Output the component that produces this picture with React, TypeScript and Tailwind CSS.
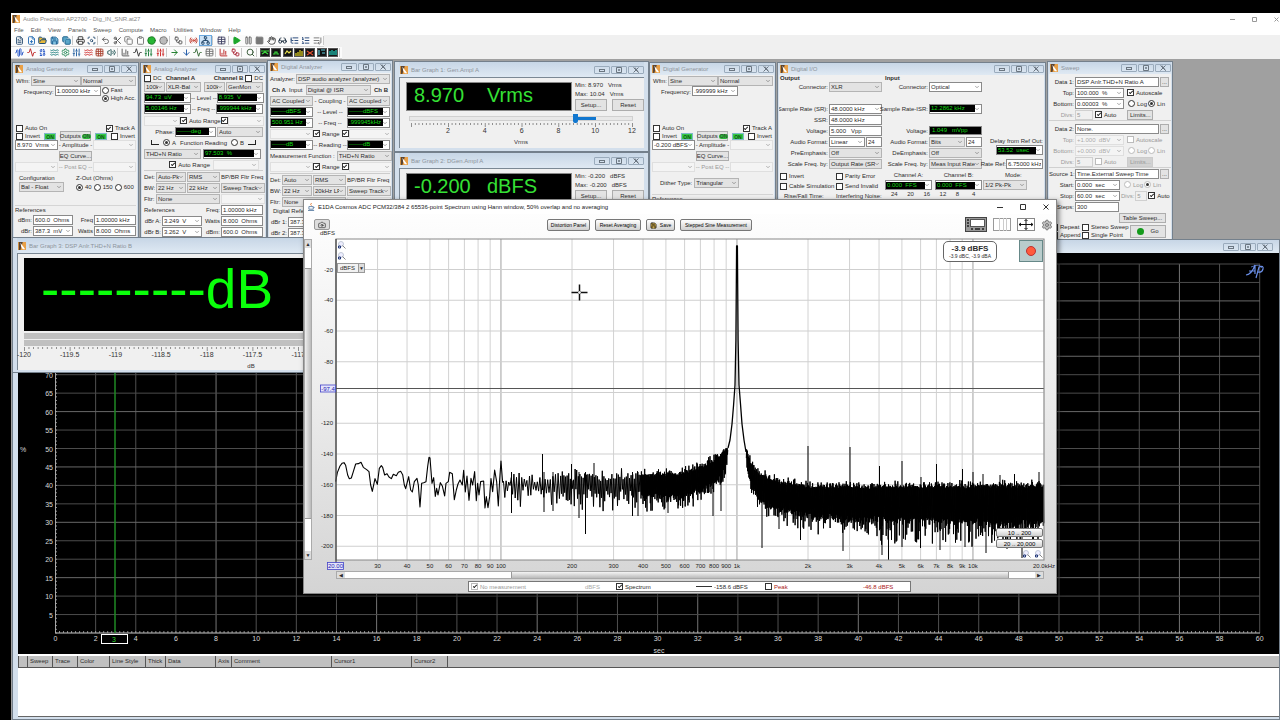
import type { ReactNode } from 'react'
import clsx from 'clsx'
import {
  Activity, ArrowDown, ArrowRight, AudioWaveform, BarChart3, Binary, Camera, ChevronDown, Circle, Clipboard, Copy,
  FilePlus, FileText, FolderOpen, Glasses, Hand, ListEnd, ListOrdered, ListTree, Network, Pause, Play, Printer,
  Radio, Save, ScanSearch, Scissors, Search, Settings, Sliders, Square, Table, Undo2, Volume2, Waves, Workflow, Grid3x3,
} from 'lucide-react'

type Tone = 'grey' | 'white' | 'lcd' | 'off'

const chevron = <ChevronDown size={6} strokeWidth={2} className="-mx-[1px] shrink-0 text-[#555]" />

function Sel({ value = '', label, w = 'w-full', tone = 'grey' }: { value?: string; label: string; w?: string; tone?: Tone }) {
  // options collapse plain spaces, so the gap before a unit is kept with nbsp
  const text = value.replace(/ {2,}/g, '\u00a0\u00a0')
  return (
    <span
      className={clsx(
        'flex h-[10px] shrink-0 items-center border pr-[2px]',
        w,
        tone === 'grey' && 'border-[#b4b4b4] bg-[#e3e3e3]',
        tone === 'white' && 'border-[#8a8a8a] bg-white',
        tone === 'lcd' && 'border-[#8a8a8a] bg-white',
        tone === 'off' && 'border-[#dcdcdc] bg-[#f6f6f6] text-[#999] opacity-80',
      )}
    >
      <select
        aria-label={label}
        defaultValue={text}
        disabled={tone === 'off'}
        className={clsx(
          'min-w-0 flex-1 appearance-none overflow-hidden pl-[1px] outline-none',
          tone === 'lcd' ? 'h-[7px] bg-black leading-[7px] text-[#12d812]' : 'h-[8px] bg-transparent leading-[8px]',
        )}
      >
        <option>{text}</option>
      </select>
      {chevron}
    </span>
  )
}

function Box({ value, label, w = 'w-full', off }: { value: string; label: string; w?: string; off?: boolean }) {
  return (
    <input
      aria-label={label}
      defaultValue={value}
      disabled={off}
      className={clsx('h-[10px] shrink-0 border px-[1px] leading-[8px]', w, off ? 'border-[#d0d0d0] bg-[#f0f0f0] text-[#999]' : 'border-[#8a8a8a] bg-white')}
    />
  )
}

function Tick({ text, on, off, type = 'checkbox', name }: { text: string; on?: boolean; off?: boolean; type?: string; name?: string }) {
  return (
    <label className={clsx('flex items-center gap-[2px] whitespace-nowrap', off && 'text-[#999]')}>
      <input
        type={type}
        name={name}
        defaultChecked={on}
        disabled={off}
        className={clsx(
          'grid size-[7px] shrink-0 appearance-none place-items-center border bg-white',
          off ? 'border-[#bbb]' : 'border-[#333]',
          type === 'radio'
            ? 'rounded-full before:size-[3px] before:rounded-full checked:before:bg-[#333]'
            : 'before:mb-[1px] before:h-[4px] before:w-[2px] before:rotate-45 checked:before:border-r checked:before:border-b checked:before:border-[#222]',
        )}
      />
      {text}
    </label>
  )
}

function Btn({ children, w = '', off }: { children: ReactNode; w?: string; off?: boolean }) {
  return (
    <button disabled={off} className={clsx('flex h-[10px] items-center justify-center border leading-none whitespace-nowrap', w, off ? 'border-[#ccc] bg-[#d2d2d2] text-[#999]' : 'border-[#adadad] bg-[#e3e3e3]')}>
      {children}
    </button>
  )
}

function AppIcon() {
  return (
    <svg viewBox="0 0 10 10" className="size-[8px] shrink-0">
      <rect width="10" height="10" fill="#e9a047" />
      <path d="M1 0h5L3 10H1z" fill="#5b4430" />
      <path d="M3 1l6 8H6L4 6z" fill="#fff" />
    </svg>
  )
}

function Win({ title, className, bar = 'h-[12px]', children }: { title: string; className: string; bar?: string; children: ReactNode }) {
  return (
    <section className={clsx('absolute flex flex-col border border-[#74808c] bg-[#d3dfec] px-[1px]', className)}>
      <header className={clsx('flex shrink-0 items-center gap-[3px] bg-linear-to-b from-[#c7d6e6] to-[#dfe9f3] pl-[1px]', bar)}>
        <AppIcon />
        <h2 className="flex-1 whitespace-nowrap text-[#8d949c]">{title}</h2>
        <span className="flex gap-[1px]">
          {['min', 'max', 'close'].map((k) => (
            <button key={k} aria-label={k} className="grid h-[8px] w-[16px] place-items-center rounded-[1px] border border-[#9aabbc] text-[#6b7681]">
              <svg viewBox="0 0 8 6" className="h-[6px] w-[8px]" fill="none" stroke="currentColor">
                {k === 'min' && <rect x="1.5" y="2.5" width="5" height="2" />}
                {k === 'max' && <path d="M1.5.5h5v5h-5zM3.5 2.5h1v1h-1z" />}
                {k === 'close' && <path d="M1.5.5l5 5M6.5.5l-5 5M3 .5l3.500 5" />}
              </svg>
            </button>
          ))}
        </span>
      </header>
      {children}
    </section>
  )
}

const row = 'flex h-[11px] shrink-0 items-center'

function On() {
  return <span className="h-[7px] w-[12px] border border-[#7fb7c9] bg-[#35c944] text-center text-[5px] leading-[6px] font-bold text-[#0b5312]">ON</span>
}

function Generator({ freq, level, track, children }: { freq: string; level: string; track: ReactNode; children: ReactNode }) {
  return (
    <div className="flex flex-1 flex-col bg-[#f0f0f0] px-[1px]">
      <div className={row}>
        <span className="w-[17px] pr-[1px] text-right">Wfm:</span>
        <Sel label="Waveform" value="Sine" w="w-[50px]" />
        <Sel label="Waveform mode" value="Normal" w="w-[55px]" />
      </div>
      <div className="flex h-[38px] items-start">
        <span className="w-[40px] pt-[2px] pr-[1px] text-right">Frequency:</span>
        <Sel label="Frequency" value={freq} w="w-[46px]" tone="white" />
        {track}
      </div>
      <div className="flex h-[8px] justify-between px-[1px]">
        <Tick text="Auto On" />
        <Tick text="Track A" on />
      </div>
      <div className="flex h-[8px] items-center justify-between px-[1px]">
        <Tick text="Invert" />
        <On />
        <Btn w="h-[9px] w-[31px] gap-[1px]">Outputs<span className="rounded-full bg-[#2db83a] px-[1px] text-[5px]">ON</span></Btn>
        <On />
        <Tick text="Invert" />
      </div>
      <div className="grid h-[10px] grid-cols-[43px_1fr_43px] items-center text-center whitespace-nowrap">
        <Sel label="Amplitude A" value={level} tone="white" />
        <span>- Amplitude -</span>
        <Sel label="Amplitude B" tone="off" />
      </div>
      <div className="flex h-[12px] items-center justify-center"><Btn w="w-[33px]">EQ Curve...</Btn></div>
      <div className="grid h-[10px] grid-cols-[43px_1fr_43px] items-center text-center whitespace-nowrap text-[#999]">
        <Sel label="Post EQ A" tone="off" />
        <span>-- Post EQ --</span>
        <Sel label="Post EQ B" tone="off" />
      </div>
      {children}
    </div>
  )
}

function Pair({ a, av, b, bv, sel }: { a: string; av: string; b: string; bv: string; sel?: boolean }) {
  return (
    <div className={row}>
      <span className="w-[18px] pr-[1px] text-right whitespace-nowrap">{a}</span>
      {sel ? <Sel label={a} value={av} w="w-[40px]" tone="white" /> : <Box label={a} value={av} w="w-[40px]" />}
      <span className="flex-1 pr-[1px] text-right">{b}</span>
      <Box label={b} value={bv} w="w-[42px]" />
    </div>
  )
}

function AnalogAnalyzer() {
  return (
    <div className="flex flex-1 flex-col bg-[#f0f0f0] px-[2px]">
      <div className="flex h-[6px] items-center justify-between">
        <span className="flex items-center gap-[4px]"><Tick text="DC" /><b>Channel A</b></span>
        <span className="flex items-center gap-[2px]"><b>Channel B</b><Tick text="DC" /></span>
      </div>
      <div className={clsx(row, 'justify-between')}>
        <Sel label="Impedance A" value="100k" w="w-[21px]" />
        <Sel label="Input A" value="XLR-Bal" w="w-[35px]" />
        <span className="w-[2px]" />
        <Sel label="Impedance B" value="100k" w="w-[21px]" />
        <Sel label="Input B" value="GenMon" w="w-[37px]" />
      </div>
      {[['94.73  uV', 'Level', '8.935  V'], ['5.00146 Hz', 'Freq', '.999944 kHz']].map(([a, n, b]) => (
        <div key={n} className="grid h-[11px] grid-cols-[47px_1fr_47px] items-center text-center">
          <Sel label={n + ' A'} value={a} tone="lcd" />
          <span className="whitespace-nowrap">-- {n} --</span>
          <Sel label={n + ' B'} value={b} tone="lcd" />
        </div>
      ))}
      <div className={clsx(row, 'mt-[1px] justify-between')}>
        <Sel label="Range A" tone="off" w="w-[36px]" />
        <Tick text="Auto Range" on />
        <Tick text="" on />
        <Sel label="Range B" tone="off" w="w-[36px]" />
      </div>
      <div className={clsx(row, 'justify-end gap-[1px]')}>
        <span>Phase:</span>
        <Sel label="Phase" value="-------deg" tone="lcd" w="w-[41px]" />
        <Sel label="Phase mode" value="Auto" w="w-[46px]" />
      </div>
      <div className={clsx(row, 'justify-center gap-[4px]')}>
        <span className="h-[5px] w-[8px] border-b border-l border-[#222]" />
        <Tick text="A" type="radio" name="aa-fn" on />
        <span>Function Reading</span>
        <Tick text="B" type="radio" name="aa-fn" />
        <span className="h-[5px] w-[8px] border-r border-b border-[#222]" />
      </div>
      <div className={clsx(row, 'gap-[2px]')}>
        <Sel label="Function" value="THD+N Ratio" w="w-[57px]" />
        <Sel label="Reading" value="97.503  %" tone="lcd" w="w-[58px]" />
      </div>
      <div className={clsx(row, 'justify-end gap-[3px] pr-[4px]')}>
        <Tick text="Auto Range" on />
        <Sel label="Reading range" tone="off" w="w-[46px]" />
      </div>
      <div className="border-t border-[#ccc]"><Filters det="Auto-Pk" bw="22 kHz" /></div>
      <div className={row}>
        <span className="flex-1">References</span>
        <span className="pr-[1px]">Freq:</span>
        <Box label="Reference freq" value="1.00000 kHz" w="w-[42px]" />
      </div>
      <Pair a="dBr A:" av="3.249  V" b="Watts" bv="8.000  Ohms" sel />
      <Pair a="dBr B:" av="3.262  V" b="dBm:" bv="600.0  Ohms" sel />
    </div>
  )
}

function Filters({ det, bw }: { det: string; bw: string }) {
  return (
    <div className="grid auto-rows-[11px] grid-cols-[11px_30px_33px_1fr] items-center gap-x-[1px] whitespace-nowrap">
      <span>Det:</span>
      <Sel label="Detector" value={det} />
      <Sel label="Detector type" value="RMS" />
      <span>BP/BR Fltr Freq</span>
      <span>BW:</span>
      <Sel label="Low bandwidth" value="22 Hz" />
      <Sel label="High bandwidth" value={bw} />
      <Sel label="Filter frequency" value="Sweep Track" />
      <span>Fltr:</span>
      <span className="col-span-2"><Sel label="Filter" value="None" /></span>
      <Sel label="Filter value" tone="off" />
    </div>
  )
}

function DigitalAnalyzer() {
  const mid = 'grid h-[11px] shrink-0 grid-cols-[43px_1fr_43px] items-center text-center whitespace-nowrap'
  return (
    <div className="flex flex-1 flex-col bg-[#f0f0f0] px-[1px]">
      <div className={clsx(row, 'gap-[1px]')}>
        <span>Analyzer:</span>
        <Sel label="Analyzer" value="DSP audio analyzer (analyzer)" w="min-w-0 flex-1" />
      </div>
      <div className={clsx(row, 'justify-between px-[2px]')}>
        <b>Ch A</b>
        <span>Input</span>
        <Sel label="Input" value="Digital @ ISR" w="w-[65px]" />
        <b>Ch B</b>
      </div>
      <div className={mid}>
        <Sel label="Coupling A" value="AC Coupled" />
        <span>- Coupling -</span>
        <Sel label="Coupling B" value="AC Coupled" />
      </div>
      <div className={mid}>
        <Sel label="Level A" value="-------dBFS" tone="lcd" />
        <span>-- Level --</span>
        <Sel label="Level B" value="-------dBFS" tone="lcd" />
      </div>
      <div className={mid}>
        <Sel label="Freq A" value="500.951 Hz" tone="lcd" />
        <span>-- Freq --</span>
        <Sel label="Freq B" value=".999945kHz" tone="lcd" />
      </div>
      <RangeRow mid={mid} />
      <div className={mid}>
        <Sel label="Reading A" value="-------dB" tone="lcd" />
        <span>-- Reading --</span>
        <Sel label="Reading B" value="-------dB" tone="lcd" />
      </div>
      <div className={clsx(row, 'gap-[2px]')}>
        <span className="whitespace-nowrap">Measurement Function :</span>
        <Sel label="Measurement function" value="THD+N Ratio" w="w-[55px]" />
      </div>
      <RangeRow mid={mid} />
      <div className="mt-[1px] border-t border-[#ccc]"><Filters det="Auto" bw="20kHz LP" /></div>
      <span className="pl-[3px] leading-[9px]">Digital References</span>
      <Pair a="dBr 1:" av="387.3  mV" b="Freq" bv="1.00000 kHz" />
      <Pair a="dBr 2:" av="387.3  mV" b="V/FS" bv="1.000  V" />
    </div>
  )
}

function RangeRow({ mid }: { mid: string }) {
  return (
    <div className={mid}>
      <Sel label="Range A" tone="off" />
      <span className="flex justify-center gap-[2px]"><Tick text="Range" on /><Tick text="" on /></span>
      <Sel label="Range B" tone="off" />
    </div>
  )
}

// Horizontal ruler; x positions are relative to the left edge of the bar.
function Ruler({ labels, first, step, minor, unit, unitX }: { labels: string[]; first: number; step: number; minor: number; unit: string; unitX: number }) {
  const ticks = Array.from({ length: (labels.length + 1) * minor + 1 }, (_, i) => ({ x: first - step + (i * step) / minor, major: i % minor === 0 }))
  return (
    <svg className="h-[24px] w-full shrink-0 overflow-visible text-[6px]" fill="#333" textAnchor="middle">
      {ticks.filter(({ x }) => x >= 0 && x <= first + step * (labels.length - 1) + 1).map(({ x, major }) => (
        <rect key={x} x={x} y={1} width={0.8} height={major ? 4 : 2} fill="#777" />
      ))}
      {labels.map((t, i) => <text key={t} x={first + i * step} y={11} className="text-[7px]">{t}</text>)}
      <text x={unitX} y={22}>{unit}</text>
    </svg>
  )
}

function BarGraph({ value, unit, min, max, children }: { value: string; unit: string; min: string; max: string; children?: ReactNode }) {
  return (
    <div className="mx-[3px] mb-[3px] flex-1 overflow-hidden border-t border-l border-[#7b8894] bg-[#f0f0f0] pt-[4px] pl-[6px]">
      <div className="flex gap-[3px]">
        <div className="flex h-[29px] w-[166px] border border-[#888] bg-black pl-[7px] text-[20px] leading-[24px] text-[#35e035]">
          <span className="w-[73px]">{value}</span>
          <span>{unit}</span>
        </div>
        <div className="flex flex-1 flex-col justify-between whitespace-nowrap">
          <span className="leading-[7px]">Min: {min} &nbsp; {unit}</span>
          <span className="leading-[7px]">Max: {max} &nbsp; {unit}</span>
          <div className="flex gap-[5px]">
            <Btn w="h-[12px] w-[32px]">Setup...</Btn>
            <Btn w="h-[12px] w-[32px]">Reset</Btn>
          </div>
        </div>
      </div>
      {children}
    </div>
  )
}

function LevelSlider() {
  return (
    <>
      <div className="mt-[3px] grid h-[8px] w-[227px] items-center pl-[3px]">
        <span className="col-start-1 row-start-1 h-[5px] border border-[#d0d0d0] bg-[#e8e8e8]" />
        <span className="col-start-1 row-start-1 ml-[168px] h-[3px] w-[19px] bg-[#1177cf]" />
        <input
          type="range"
          aria-label="Generator level"
          min={0}
          max={12}
          step={0.01}
          defaultValue={8.97}
          className="col-start-1 row-start-1 h-[8px] w-full appearance-none bg-transparent [&::-webkit-slider-thumb]:h-[9px] [&::-webkit-slider-thumb]:w-[5px] [&::-webkit-slider-thumb]:appearance-none [&::-webkit-slider-thumb]:rounded-b-[2px] [&::-webkit-slider-thumb]:bg-[#1177cf]"
        />
      </div>
      <Ruler labels={['2', '4', '6', '8', '10', '12']} first={42} step={36.8} minor={10} unit="Vrms" unitX={115} />
    </>
  )
}

function Line({ text, children }: { text: string; children: ReactNode }) {
  return (
    <div className="flex h-[11px] items-center justify-end gap-[1px] whitespace-nowrap">
      <span>{text}</span>
      <span className="flex w-[53px] shrink-0 items-center gap-[1px]">{children}</span>
    </div>
  )
}

function DigitalIO() {
  return (
    <div className="flex flex-1 overflow-hidden bg-[#f0f0f0]">
      <div className="w-[103px] shrink-0 pl-[1px]">
        <b className="block h-[6px] leading-[6px]">Output</b>
        <Line text="Connector:"><Sel label="Output connector" value="XLR" /></Line>
        <div className="h-[11px]" />
        <Line text="Sample Rate (SR):"><Sel label="Sample rate" value="48.0000 kHz" tone="white" /></Line>
        <Line text="SSR:"><Box label="SSR" value="48.0000 kHz" /></Line>
        <Line text="Voltage:"><Box label="Voltage" value="5.000   Vpp" /></Line>
        <Line text="Audio Format:"><Sel label="Output format" value="Linear" tone="white" w="w-[36px]" /><Box label="Output bits" value="24" w="w-[16px]" /></Line>
        <Line text="PreEmphasis:"><Sel label="PreEmphasis" value="Off" /></Line>
        <Line text="Scale Freq. by:"><Sel label="Output scale" value="Output Rate (SR)" /></Line>
        <div className="mt-[3px] grid grid-cols-[56px_1fr] gap-y-[2px]">
          <Tick text="Invert" />
          <Tick text="Parity Error" />
          <Tick text="Cable Simulation" />
          <Tick text="Send Invalid" />
          <span className="pl-[4px] whitespace-nowrap">Rise/Fall Time:</span>
          <span className="whitespace-nowrap">Interfering Noise:</span>
        </div>
      </div>
      <div className="w-[100px] shrink-0">
        <b className="block h-[6px] pl-[3px] leading-[6px]">Input</b>
        <Line text="Connector:"><Sel label="Input connector" value="Optical" tone="white" /></Line>
        <div className="h-[11px]" />
        <Line text="Sample Rate-ISR:"><Sel label="Input rate" value="12.2862 kHz" tone="lcd" /></Line>
        <div className="h-[11px]" />
        <Line text="Voltage:"><output className="h-[9px] w-full border border-[#888] bg-black pl-[2px] leading-[7px] text-[#12d812]">1.049 &nbsp; mVpp</output></Line>
        <Line text="Audio Format:"><Sel label="Input format" value="Bits" w="w-[36px]" /><Box label="Input bits" value="24" w="w-[16px]" /></Line>
        <Line text="DeEmphasis:"><Sel label="DeEmphasis" value="Off" /></Line>
        <Line text="Scale Freq. by:"><Sel label="Input scale" value="Meas Input Rate" /></Line>
        <div className="mt-[2px] grid grid-cols-2 gap-x-[3px] gap-y-[1px] pl-[3px] text-center">
          <span>Channel A:</span>
          <span>Channel B:</span>
          <Sel label="Channel A" value="0.000  FFS" tone="lcd" />
          <Sel label="Channel B" value="0.000  FFS" tone="lcd" />
        </div>
        <div className="flex w-[126px] justify-between pr-[36px] pl-[9px] whitespace-nowrap">
          {['24', '20', '16', '12', '8', '4'].map((t) => <span key={t} className="w-0">{t}</span>)}
        </div>
      </div>
      <div className="flex min-w-0 flex-1 flex-col items-end pt-[62px] pr-[1px] whitespace-nowrap">
        <span className="h-[8px]">Delay from Ref Out:</span>
        <Sel label="Delay from Ref Out" value="53.52  usec" tone="lcd" w="w-[47px]" />
        <span className="mt-[4px] flex items-center">Rate Ref:<Box label="Rate Ref" value="6.75000 kHz" w="w-[37px]" /></span>
        <span className="mt-[2px] w-[38px]">Mode:</span>
        <span className="mt-[1px] mr-[16px]"><Sel label="Mode" value="1/2 Pk-Pk" w="w-[44px]" /></span>
      </div>
    </div>
  )
}

function SweepData({ n, source, top, bottom, off }: { n: number; source: string; top: string; bottom: string; off?: boolean }) {
  const dim = off ? 'text-[#999]' : ''
  const lab = 'w-[25px] text-right'
  return (
    <div className="border-b border-[#d0d0d0] pt-[2px]">
      <div className={clsx(row, 'gap-[1px]')}>
        <span className={lab}>Data {n}:</span>
        <Box label={'Data ' + n} value={source} w="w-[84px]" />
        <Btn w="w-[9px]">...</Btn>
      </div>
      <div className={clsx(row, dim, 'gap-[1px]')}>
        <span className={lab}>Top:</span>
        <Sel label={'Top ' + n} value={top} tone={off ? 'off' : 'white'} w="w-[49px] mr-[2px]" />
        <Tick text="Autoscale" on={!off} off={off} />
      </div>
      <div className={clsx(row, dim, 'gap-[1px]')}>
        <span className={lab}>Bottom:</span>
        <Sel label={'Bottom ' + n} value={bottom} tone={off ? 'off' : 'white'} w="w-[49px] mr-[3px]" />
        <Tick text="Log" type="radio" name={'scale' + n} off={off} />
        <Tick text="Lin" type="radio" name={'scale' + n} on={!off} off={off} />
      </div>
      <div className={clsx(row, dim, 'gap-[1px]')}>
        <span className={clsx(lab, 'text-[#999]')}>Divs:</span>
        <Box label={'Divs ' + n} value="5" w="w-[18px] mr-[1px]" off />
        <Tick text="Auto" on={!off} off={off} />
        <span className="w-[9px]" />
        <Btn w="w-[26px]" off={off}>Limits...</Btn>
      </div>
    </div>
  )
}

function Sweep() {
  const lab = 'w-[25px] shrink-0 text-right whitespace-nowrap'
  return (
    <div className="flex flex-1 flex-col bg-[#f0f0f0]">
      <SweepData n={1} source="DSP Anlr.THD+N Ratio A" top="100.000  %" bottom="0.00003  %" />
      <SweepData n={2} source="None." top="+1.000  dBV" bottom="+0.000  dBV" off />
      <div className={clsx(row, 'gap-[1px]')}>
        <span className={lab}>Source 1:</span>
        <Box label="Source 1" value="Time.External Sweep Time" w="w-[84px]" />
        <Btn w="w-[9px]">...</Btn>
      </div>
      <div className={clsx(row, 'gap-[1px]')}>
        <span className={lab}>Start:</span>
        <Sel label="Start" value="0.000  sec" tone="white" w="w-[45px] mr-[3px]" />
        <Tick text="Log" type="radio" name="src" off />
        <Tick text="Lin" type="radio" name="src" on off />
      </div>
      <div className={clsx(row, 'gap-[1px]')}>
        <span className={lab}>Stop:</span>
        <Sel label="Stop" value="60.00  sec" tone="white" w="w-[45px]" />
        <span className="text-[#999]">Divs:</span>
        <Box label="Source divs" value="5" w="w-[12px]" off />
        <Tick text="Auto" on />
      </div>
      <div className={clsx(row, 'gap-[1px]')}>
        <span className={lab}>Steps:</span>
        <Box label="Steps" value="300" w="w-[44px]" />
      </div>
      <div className="flex h-[11px] items-center justify-end pr-[5px]"><Btn w="w-[47px]">Table Sweep...</Btn></div>
      <div className="flex items-center justify-between pr-[5px] pl-[2px]">
        <div className="grid grid-cols-[31px_1fr]">
          <Tick text="Repeat" />
          <Tick text="Stereo Sweep" />
          <Tick text="Append" />
          <Tick text="Single Point" />
        </div>
        <Btn w="h-[13px] w-[36px] gap-[6px]"><span className="size-[7px] rounded-full bg-[#149a1c]" />Go</Btn>
      </div>
    </div>
  )
}

function ApGraph() {
  const px = (v: number) => 55.5 + v * 20.07
  const py = (v: number) => 633 - v * 3.69
  const xs = Array.from({ length: 31 }, (_, i) => i * 2)
  const ys = Array.from({ length: 21 }, (_, i) => i * 5)
  return (
    <svg viewBox="18 253 1262 401" preserveAspectRatio="xMinYMin slice" className="h-[401px] w-full shrink-0 bg-black text-[7px]" fill="#d8d8d8">
      <g strokeWidth="1">
        {xs.map((v) => <path key={v} d={`M${px(v)} 264V633`} stroke={v % 8 ? '#505050' : '#757575'} />)}
        {ys.map((v) => <path key={v} d={`M55 ${py(v)}H1260`} stroke={v % 15 ? '#4c4c4c' : '#686868'} />)}
      </g>
      <g stroke="#b0b0b0" strokeWidth="0.8">
        <path d="M55.500 264V633H1260" fill="none" />
        {Array.from({ length: 300 }, (_, i) => <path key={i} d={`M${px(i / 5)} 631v2`} />)}
        {Array.from({ length: 100 }, (_, i) => <path key={i} d={`M55 ${py(i)}h2`} />)}
      </g>
      <path d="M115 264V633" stroke="#1f8a24" strokeWidth="1.500" />
      <rect x="101.500" y="634.500" width="26" height="9" fill="#000" stroke="#fff" />
      <text x="114" y="641.500" textAnchor="middle" fill="#2bd52b">3</text>
      {xs.map((v) => <text key={v} x={px(v)} y="641" textAnchor="middle">{v}</text>)}
      {ys.slice(1, 15).map((v) => <text key={v} x="53" y={py(v) + 3} textAnchor="end">{v}</text>)}
      <text x="20" y="452">%</text>
      <text x="659" y="653" textAnchor="middle">sec</text>
      <g fill="none" stroke="#6b8fe8" strokeWidth="1.200">
        <path d="M1246 275q6-1 9-10v9M1249 271h6M1256 278l3-11q5-2 4 2t-5 3" />
        <path d="M1251 267q9-4 11 1" strokeWidth=".7" />
      </g>
    </svg>
  )
}

const columns: [string, string][] = [
  ['', 'w-[9px]'], ['Sweep', 'w-[25px]'], ['Trace', 'w-[25px]'], ['Color', 'w-[32px]'], ['Line Style', 'w-[36px]'], ['Thick', 'w-[20px]'],
  ['Data', 'w-[50px]'], ['Axis', 'w-[16px]'], ['Comment', 'w-[100px]'], ['Cursor1', 'w-[80px]'], ['Cursor2', 'w-[36px]'], ['', ''],
]

// Low end of the trace in thirds of a pixel, measured from (300, 430).
const lowEnd = '107,155 112,128 120,108 126,100 132,98 137,106 143,135 148,146 154,144 160,125 167,102 175,101 183,97 190,112 200,119 207,125 212,165 217,184 222,160 225,146 232,163 238,115 244,107 248,112 254,135 261,131 267,141 274,146 280,133 289,137 295,127 302,124 308,134 313,165 317,176 326,140 332,180 337,186 343,155 351,145 355,165 360,231 365,160 371,158 378,155 383,110 387,82 390,84 396,160 401,143 406,199 410,175 414,195 421,158 427,168 434,198 438,160 445,155 449,127 457,131 463,209 469,180 474,162 480,150 487,165 491,121 496,186 501,138 507,211 513,145 518,165 524,125 529,212 533,160 537,195 542,155 551,153 555,234 559,200 564,233 569,200 573,146 578,185 584,120 590,155 595,228 599,150 603,93 608,158'

// x, top of the noise band, bottom of the band, extra depth of the dips
const band = [
  [502, 473, 495, 12], [560, 474, 497, 18], [600, 474, 499, 16], [640, 474, 499, 16], [680, 473, 500, 14], [700, 466, 493, 16], [713, 460, 487, 14], [725, 450, 474, 12], [728, 447, 455, 3],
  [746, 449, 462, 4], [750, 460, 486, 6], [758, 472, 500, 10], [770, 478, 508, 12], [780, 481, 512, 14], [813, 486, 519, 16], [880, 486, 522, 24], [1044, 485, 526, 24],
]
const skirt = '728,448 730,440 732,424 733.5,406 735,385 735.9,340 736.6,246 737.4,246 738.1,340 739,385 740.5,404 742,424 744,440 746,452'
const peaks = [[542.5, 454], [571.5, 464], [594, 463], [808, 446], [850, 447], [879.5, 466], [902, 461], [921, 477], [936.5, 464], [962.5, 469], [973, 472], [983, 474], [1000, 475], [1014.5, 474], [1039, 472]]
const dips = [[511.5, 513], [544, 512], [553, 511], [579, 518], [585.5, 534], [632.5, 516], [638, 516], [668, 513], [713, 516], [721, 511], [762, 548], [779, 529], [800.5, 540], [843, 551], [882, 555], [888.5, 560], [902, 547], [920.5, 548], [940, 550], [965, 547], [986, 553], [1007, 549], [1022, 558]]

function noise() {
  let seed = 7
  const rnd = () => {
    seed = (seed * 1664525 + 1013904223) % 4294967296
    return seed / 4294967296
  }
  const at = (x: number) => {
    const i = Math.max(1, band.findIndex((b) => b[0] >= x))
    const [a, b] = [band[i - 1], band[i]]
    return a.map((v, k) => v + ((b[k] - v) * (x - a[0])) / (b[0] - a[0]))
  }
  let d = 'M502.7 482'
  let up = true
  let skipped = false
  for (let x = 503.5; x < 1044; x += x < 560 ? 1.3 : x < 640 ? 0.8 : 0.33) {
    if (x > 728 && x < 746) {
      skipped = true
      continue
    }
    const [, top, bottom, dip] = at(x)
    const loose = x < 560 ? 9 : x < 640 ? 7 : 3
    const y = up ? top - rnd() ** 3 * 6 + rnd() * loose : bottom - rnd() * (loose + 3) + rnd() ** 3 * dip
    d += `${skipped ? 'M' : 'L'}${x.toFixed(1)} ${y.toFixed(1)}`
    skipped = false
    up = !up
  }
  return d
}
const noisePath = noise()

const freqs: [number, string][] = [
  [20, ''], [30, '30'], [40, '40'], [50, '50'], [60, '60'], [70, '70'], [80, '80'], [90, '90'], [100, '100'], [200, '200'], [300, '300'], [400, '400'],
  [500, '500'], [600, '600'], [700, '700'], [800, '800'], [900, '900'], [1000, '1k'], [2000, '2k'], [3000, '3k'], [4000, '4k'], [5000, '5k'],
  [6000, '6k'], [7000, '7k'], [8000, '8k'], [9000, '9k'], [10000, '10k'], [20000, '20.0kHz'],
]
const levels = [-20, -40, -60, -80, -100, -120, -140, -160, -180, -200]

function Spectrum() {
  const fx = (f: number) => 336 + Math.log10(f / 20) * 236
  const ly = (v: number) => 238.75 - v * 1.5375
  return (
    <svg viewBox="312 238 744 333" className="block h-[333px] w-full text-[6px]" fill="#222">
      <rect x="336" y="239" width="708" height="321" fill="#fff" />
      <g strokeWidth="1" fill="none">
        {freqs.map(([f]) => <path key={f} d={`M${fx(f)} 239V560`} stroke={[100, 1000, 10000].includes(f) ? '#a0a0a0' : '#d2d2d2'} />)}
        {levels.map((v) => <path key={v} d={`M336 ${ly(v)}H1044`} stroke="#cfcfcf" />)}
        <path d="M336 388.500H1044" stroke="#555" />
      </g>
      <g fill="none" stroke="#000" strokeLinejoin="round">
        <polyline points={lowEnd} transform="translate(300 430) scale(.3333)" strokeWidth="3.300" />
        <path d={noisePath} strokeWidth="1" />
        <polyline points={skirt} strokeWidth="1.300" />
        {peaks.map(([x, y]) => <path key={x} d={`M${x} 490V${y}`} />)}
        {dips.map(([x, y]) => <path key={x} d={`M${x} ${x > 750 ? 495 : 472}V${y}`} />)}
      </g>
      <rect x="336" y="239" width="708" height="321" fill="none" stroke="#888" />
      <path d="M336 239V563" stroke="#333" />
      {freqs.map(([f, t]) => t && <text key={f} x={fx(f)} y="568" textAnchor="middle">{t}</text>)}
      {levels.filter((v) => v !== -100).map((v) => <text key={v} x="333" y={ly(v) + 2} textAnchor="end">{v}</text>)}
      <g fill="#e4e4fa" stroke="#4444c8" strokeWidth=".8">
        <rect x="320.500" y="385" width="15" height="7" />
        <rect x="327.500" y="562.500" width="16" height="7" />
      </g>
      <g fill="#2222b0" textAnchor="middle">
        <text x="328" y="390.500">-97.4</text>
        <text x="335.500" y="568">20.00</text>
      </g>
      <path d="M571.500 292.500h16M579.500 284.500v16" stroke="#111" strokeWidth="1.500" />
      <path d="M578 292.500h3M579.500 291v3" stroke="#fff" strokeWidth=".8" />
      {[[341, 245], [341, 256], [1026, 554], [1038, 554]].map(([x, y]) => (
        <g key={x + '-' + y} fill="none">
          <circle cx={x} cy={y - 1} r="2.500" fill="#eef" stroke="#b4bccd" strokeWidth=".8" />
          <path d={`M${x + 1.5} ${y + 0.5}l3 3`} stroke="#888" />
          <path d={`M${x - 2.5} ${y + 1}h2v2h-2z`} stroke="#23387a" />
        </g>
      ))}
    </svg>
  )
}

const java = 'flex items-center justify-center rounded-[2px] border border-[#777] bg-linear-to-b from-white to-[#cfcfcf] whitespace-nowrap text-black'

function CosmosWindow() {
  return (
    <section className="absolute top-[199px] left-[303px] z-20 flex h-[395px] w-[754px] flex-col border border-[#888] bg-linear-to-b from-white via-[#ececec] to-[#d4d4d4] shadow-[2px_2px_5px_rgba(0,0,0,0.5)]">
      <header className="flex h-[14px] items-center bg-white pl-[4px]">
        <svg viewBox="0 0 8 9" className="mr-[3px] h-[8px] w-[7px]" fill="none" stroke="#5b7fa5">
          <path d="M1 4h5v3H1zM6 5h1.500M0 8.500h7" />
          <path d="M4 0q-2 2 0 3" stroke="#e07020" />
        </svg>
        <h1 className="flex-1 whitespace-nowrap text-[#222]">E1DA Cosmos ADC PCM32/384 2 65536-point Spectrum using Hann window, 50% overlap and no averaging</h1>
        <span className="flex gap-[17px] pr-[7px]">
          {['M0 4.500h6', 'M.5 1.500h5v5h-5z', 'M.5 1.500l5 5m0-5l-5 5'].map((d, i) => (
            <button key={d} aria-label={['minimize', 'maximize', 'close'][i]}>
              <svg viewBox="0 0 6 8" className="h-[8px] w-[6px]" fill="none" stroke="#333"><path d={d} /></svg>
            </button>
          ))}
        </span>
      </header>
      <div className="flex h-[24px] items-start pt-[5px]">
        <div className="flex w-[243px] flex-col items-start pl-[10px]">
          <button aria-label="capture" className="flex h-[11px] w-[16px] items-center justify-center rounded-[2px] border border-[#999] bg-[#ddd]"><Camera size={8} /></button>
          <span className="h-[6px] pl-[6px] leading-[7px]">dBFS</span>
        </div>
        <div className="flex flex-1 gap-[5px]">
          <button className={clsx(java, 'h-[12px] w-[43px] text-[5px]')}>Distortion Panel</button>
          <button className={clsx(java, 'h-[12px] w-[46px] text-[5px]')}>Reset Averaging</button>
          <button className={clsx(java, 'h-[12px] w-[29px] gap-[3px] text-[5px]')}><Save size={7} fill="#c9a84c" />Save</button>
          <button className={clsx(java, 'h-[12px] w-[72px] text-[5px]')}>Stepped Sine Measurement</button>
        </div>
        <div className="-mt-[2px] flex items-center gap-[6px] pr-[3px]">
          <button aria-label="readouts" className="h-[15px] w-[22px]">
            <svg viewBox="0 0 22 15" className="h-full w-full">
              <rect x=".5" y=".5" width="21" height="14" fill="#999" stroke="#444" />
              <rect x="5.500" y="2.500" width="14" height="7" fill="#fff" stroke="#555" />
              <path d="M2 3h2M2 6h2M2 9h2M6 12h2M10 12h5M17 12h2" stroke="#222" strokeWidth="1.500" />
            </svg>
          </button>
          <button aria-label="grid" className="h-[13px] w-[18px]">
            <svg viewBox="0 0 18 13" className="h-full w-full" fill="#fff" stroke="#999">
              <rect x=".5" y=".5" width="17" height="12" />
              <path d="M6.500 0v13M10.500 0v13M13.500 0v13" stroke="#ccc" />
            </svg>
          </button>
          <button aria-label="limits" className="h-[13px] w-[18px]">
            <svg viewBox="0 0 18 13" className="h-full w-full" fill="#fff" stroke="#888">
              <rect x=".5" y=".5" width="17" height="12" />
              <path d="M2 6.500h14M9 1.500v10M4 5L2 6.500 4 8M14 5l2 1.500L14 8M7.500 3L9 1.500 10.500 3M7.500 10L9 11.500 10.500 10" fill="none" stroke="#111" />
            </svg>
          </button>
          <button aria-label="settings" className="text-[#777]"><Settings size={12} fill="#c4c4c4" /></button>
        </div>
      </div>
      <div className="flex">
        <div className="mt-[1px] flex h-[321px] w-[8px] flex-col border border-[#aaa] bg-white">
          <button className="h-[8px] bg-[#ddd] text-[5px]">▲</button>
          <span className="mt-[20px] h-[251px] border-y border-[#999] bg-linear-to-r from-[#eee] to-[#bbb]" />
          <button className="mt-auto h-[8px] bg-[#ddd] text-[5px]">▼</button>
        </div>
        <div className="relative min-w-0 flex-1">
          <Spectrum />
          <span className="absolute top-[25px] left-[25px] flex h-[10px] w-[28px] items-center border border-[#999] bg-[#f2f2f2]">
            <select aria-label="Level unit" className="w-[20px] appearance-none pl-[2px] leading-[8px]"><option>dBFS</option></select>
            <span className="h-full flex-1 border-l border-[#999] bg-[#ddd] text-center text-[5px] leading-[8px]">▼</span>
          </span>
          <div className="absolute top-[3px] right-[59px] flex h-[21px] w-[54px] flex-col items-center justify-center rounded-[5px] border border-[#666] bg-white whitespace-nowrap">
            <b className="text-[8px] leading-[9px]">-3.9 dBFS</b>
            <span className="text-[5px] leading-[6px]">-3.9 dBC, -3.9 dBA</span>
          </div>
          <button aria-label="record" className="absolute top-[2px] right-[13px] grid h-[22px] w-[24px] place-items-center border border-[#688] bg-[#b9cccc]">
            <span className="size-[10px] rounded-full border border-[#b33] bg-[#ff5a3c]" />
          </button>
          <div className="absolute right-[13px] bottom-[23px] flex w-[47px] flex-col gap-[2px]">
            <button className={clsx(java, 'h-[9px]')}>10 .. 200</button>
            <button className={clsx(java, 'h-[9px]')}>20 .. 20,000</button>
          </div>
        </div>
      </div>
      <div className="mr-[12px] ml-[32px] flex h-[8px] shrink-0 border border-[#aaa] bg-white">
        <button className="w-[8px] bg-[#ddd] text-[5px] leading-[6px]">◀</button>
        <span className="ml-[166px] flex-1 border-x border-[#999] bg-linear-to-b from-[#f4f4f4] to-[#bbb]" />
        <button className="ml-[26px] w-[8px] bg-[#ddd] text-[5px] leading-[6px]">▶</button>
      </div>
      <div className="mt-[2px] ml-[164px] grid h-[11px] w-[443px] shrink-0 grid-cols-[114px_31px_80px_69px_98px_1fr] items-center border border-[#777] bg-white px-[2px] whitespace-nowrap">
        <Tick text="No measurement" on off />
        <span className="text-[#aaa]">dBFS</span>
        <Tick text="Spectrum" on />
        <span className="flex items-center gap-[2px]"><span className="h-[1px] w-[16px] bg-[#333]" />-158.6 dBFS</span>
        <span className="text-[#a22]"><Tick text="Peak" /></span>
        <span className="text-[#a22]">-46.8 dBFS</span>
      </div>
    </section>
  )
}

function Dark({ d, c = '#3fe03f' }: { d: string; c?: string }) {
  return (
    <svg viewBox="0 0 10 9" className="h-[9px] w-[10px]" fill="none" stroke={c} strokeWidth="1.200">
      <rect x=".5" y=".5" width="9" height="8" fill="#111" stroke="#555" />
      <path d={d} />
    </svg>
  )
}

const ic = (I: typeof Save, color: string, fill = 'none') => <I size={9} strokeWidth={2.5} color={color} fill={fill} />

const standard: [string, ReactNode[]][] = [
  ['w-[58px]', [ic(FileText, '#357'), ic(FilePlus, '#2a6fb5'), ic(FolderOpen, '#147', '#e6b83c'), ic(Save, '#1c5d8f', '#7ec0e0'), ic(Copy, '#1b5f8a', '#5aa6c8')]],
  ['w-[22px]', [ic(Printer, '#333'), ic(ScanSearch, '#357')]],
  ['w-[69px]', [ic(Undo2, '#666'), ic(Scissors, '#555'), ic(Copy, '#777'), ic(Clipboard, '#777'), ic(Circle, '#1d7a25', '#27b534'), ic(Circle, '#777', '#bbb')]],
  ['w-[13px]', [ic(Workflow, '#555')]],
  ['w-[24px]', [ic(Radio, '#c0392b'), ic(Network, '#246')]],
  ['w-[13px]', [ic(Table, '#446')]],
  ['w-[92px]', [ic(Play, '#1ca52b', '#1ca52b'), ic(Pause, '#666'), ic(Square, '#777', '#777'), ic(Hand, '#444'), ic(Glasses, '#234'), ic(ListTree, '#247'), ic(ListOrdered, '#247'), ic(ListEnd, '#777')]],
]
const instruments: [string, ReactNode[]][] = [
  ['w-[103px]', [ic(AudioWaveform, '#2353c5'), ic(Activity, '#b22'), ic(Binary, '#2353c5'), ic(Waves, '#177'), ic(Settings, '#285'), ic(Sliders, '#225fa0'), ic(Waves, '#c22'), ic(Grid3x3, '#a43'), ic(Volume2, '#255')]],
  ['w-[46px]', [ic(BarChart3, '#555'), ic(Activity, '#333'), ic(Sliders, '#173'), ic(Sliders, '#c22')]],
  ['w-[46px]', [ic(ArrowRight, '#197a25'), ic(ArrowDown, '#1c56a5'), ic(Activity, '#363'), ic(Table, '#777')]],
  ['w-[23px]', [ic(BarChart3, '#b22'), ic(Workflow, '#a23')]],
  ['w-[12px]', [ic(Search, '#353')]],
  ['w-[80px]', [<Dark d="M1 3h8M2 6l3-2 3 2" />, <Dark d="M2 6h2V4h2v2h2" />, <Dark d="M2 6l2-3 2 2 2-2" c="#e8e050" />, <Dark d="M2 8V5m2 3V4m2 4V2m2 6V3" c="#e8d820" />, <Dark d="M2 3l6 4M2 7l6-4" c="#e05030" />, <Dark d="M2 2v5m2-5h4M5 5h3" c="#60d0e0" />, <Dark d="M2 7V3m2 4V2m2 5V3m2 4V2" c="#20d0c0" />]],
]

function Toolbar({ groups, w }: { groups: [string, ReactNode[]][]; w: string }) {
  return (
    <div className={clsx('flex h-[12px] gap-[3px] border-b border-[#d5d5d5] bg-[#fbfbfb] pl-[3px]', w)}>
      {groups.map(([gw, icons], g) => (
        <div key={g} className={clsx('flex items-center shadow-[2px_0_0_-1px_#c8c8c8]', gw)}>
          {icons.map((icon, i) => (
            <button key={i} aria-label={`tool ${g + 1}.${i + 1}`} className={clsx('flex h-[11px] flex-1 items-center justify-center', gw === 'w-[24px]' && i === 1 && 'border border-[#6aa7dd] bg-[#cfe4f7]')}>{icon}</button>
          ))}
        </div>
      ))}
    </div>
  )
}

export default function App() {
  return (
    <main className="relative h-screen overflow-hidden bg-black pt-[13px] pl-[11px] font-['Liberation_Sans',Arial,sans-serif] text-[6px] leading-[8px] text-[#2c2c2c]">
      <header className="bg-white">
        <div className="flex h-[12px] items-center gap-[3px] pl-[1px]">
          <AppIcon />
          <h1 className="flex-1 text-[#888]">Audio Precision AP2700 - Dig_IN_SNR.at27</h1>
          <span className="flex gap-[16px]">
            {['M0 4.500h5', 'M.5 2.500h4v4h-4z', 'M.5 2.500l4 4m0-4l-4 4'].map((d, i) => (
              <button key={d} aria-label={['minimize', 'restore', 'close'][i]}>
                <svg viewBox="0 0 6 8" className="h-[8px] w-[6px]" fill="none" stroke="#999"><path d={d} /></svg>
              </button>
            ))}
          </span>
        </div>
        <nav className="flex h-[10px] items-center gap-[7px] pl-[3px] text-[#555]">
          {['File', 'Edit', 'View', 'Panels', 'Sweep', 'Compute', 'Macro', 'Utilities', 'Window', 'Help'].map((m) => <button key={m}>{m}</button>)}
        </nav>
      </header>
      <div className="bg-[#f0f0f0]">
        <Toolbar groups={standard} w="w-[313px]" />
        <Toolbar groups={instruments} w="w-[331px]" />
      </div>
      <div className="h-full bg-[#a0a0a0]" />

      <Win title="" className="top-[239px] right-0 bottom-0 left-[12px] pr-0 pl-[5px]" bar="h-[13px] pr-[6px]">
        <ApGraph />
        <div className="flex-1 border-t-2 border-b border-t-white border-b-[#666] bg-white">
          <table className="w-full table-fixed text-left">
            <thead className="bg-[#c0c0c0]">
              <tr className="h-[11px] border-b border-[#555]">
                {columns.map(([t, w], i) => <th key={i} className={clsx('border-l border-[#555] pl-[2px] leading-[10px] font-normal whitespace-nowrap', w)}>{t}</th>)}
              </tr>
            </thead>
          </table>
        </div>
        <div className="h-[2px]" />
      </Win>

      <Win title="Analog Generator" className="top-[62px] left-[12px] h-[176px] w-[127px]">
        <Generator
          freq="1.00000 kHz"
          level="8.970  Vrms"
          track={<span className="pl-[1px]"><Tick text="Fast" type="radio" name="acc" /><Tick text="High Acc." type="radio" name="acc" on /></span>}
        >
          <div className="mt-[2px] grid grid-cols-[57px_1fr] items-center pl-[4px]">
            <span>Configuration</span>
            <span>Z-Out (Ohms)</span>
            <Sel label="Configuration" value="Bal - Float" w="w-[45px]" />
            <span className="flex gap-[2px]">
              <Tick text="40" type="radio" name="z" on />
              <Tick text="150" type="radio" name="z" />
              <Tick text="600" type="radio" name="z" />
            </span>
          </div>
          <span className="mt-[13px] border-t border-[#d5d5d5]">References</span>
          <Pair a="dBm:" av="600.0  Ohms" b="Freq" bv="1.00000 kHz" />
          <Pair a="dBr:" av="387.3  mV" b="Watts" bv="8.000  Ohms" sel />
        </Generator>
      </Win>
      <Win title="Analog Analyzer" className="top-[62px] left-[140px] h-[176px] w-[127px]"><AnalogAnalyzer /></Win>
      <Win title="Digital Analyzer" className="top-[60px] left-[267px] h-[178px] w-[126px]"><DigitalAnalyzer /></Win>
      <Win title="Bar Graph 1: Gen.Ampl A" className="top-[61px] left-[394px] h-[91px] w-[255px]" bar="h-[15px] mx-[3px]">
        <BarGraph value="8.970" unit="Vrms" min="8.970" max="10.04"><LevelSlider /></BarGraph>
      </Win>
      <Win title="Bar Graph 2: DGen.Ampl A" className="top-[152px] left-[394px] h-[91px] w-[255px]" bar="h-[15px] mx-[3px]">
        <BarGraph value="-0.200" unit="dBFS" min="-0.200" max="-0.200" />
      </Win>
      <Win title="Digital Generator" className="top-[62px] left-[649px] h-[176px] w-[127px]">
        <Generator freq=".999999 kHz" level="-0.200 dBFS" track={null}>
          <div className="mt-[6px] flex items-center gap-[2px] pl-[8px]">
            Dither Type:
            <Sel label="Dither Type" value="Triangular" w="w-[45px]" />
          </div>
          <span className="mt-[6px] border-t border-[#d5d5d5]">References</span>
        </Generator>
      </Win>
      <Win title="Digital I/O" className="top-[62px] left-[777px] h-[176px] w-[269px]"><DigitalIO /></Win>
      <Win title="Sweep" className="top-[61px] left-[1047px] h-[179px] w-[126px]"><Sweep /></Win>

      <Win title="Bar Graph 3: DSP Anlr.THD+N Ratio B" className="top-[237px] left-[12px] z-10 h-[136px] w-[479px]" bar="h-[15px] mx-[3px]">
        <div className="mx-[3px] mb-[3px] flex-1 border-t border-l border-[#7b8894] bg-[#f0f0f0] pt-[4px] pl-[6px]">
          <div className="h-[73px] bg-black pl-[17px] text-[55px] leading-[62px] text-[#0aff0a]">---------dB</div>
          <div className="mt-[2px] h-[6px] bg-[#c0c0c0]" />
          <div className="mt-[1px] h-[6px] bg-[#c0c0c0]" />
          <Ruler labels={['-120', '-119.5', '-119', '-118.5', '-118', '-117.5', '-117']} first={0} step={45.7} minor={10} unit="dB" unitX={227} />
        </div>
      </Win>

      <CosmosWindow />
    </main>
  )
}
